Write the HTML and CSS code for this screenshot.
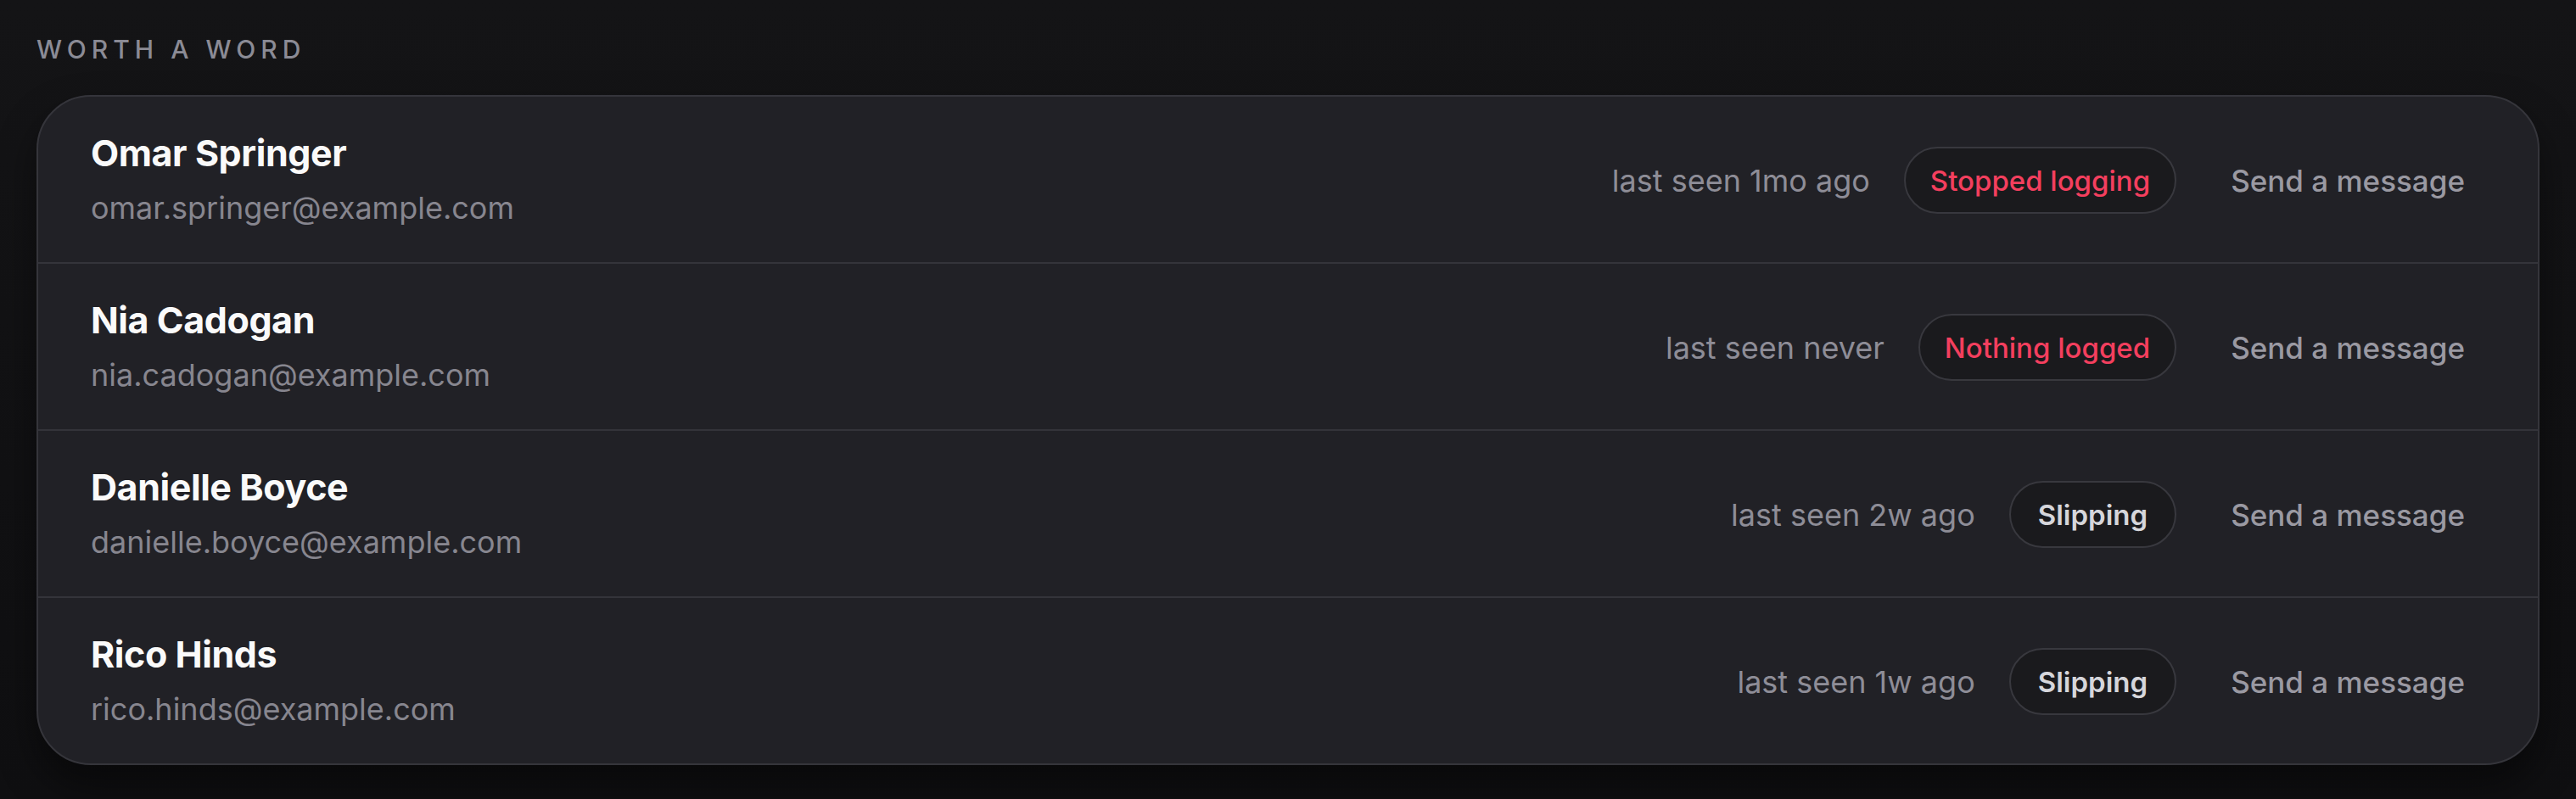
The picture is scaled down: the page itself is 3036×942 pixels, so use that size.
FILE: index.html
```html
<!DOCTYPE html>
<html lang="en">
<head>
<meta charset="utf-8">
<title>Worth a word</title>
<link rel="stylesheet" href="styles.css">
</head>
<body>
<section class="panel">
  <h2 class="panel-title">Worth a word</h2>
  <ul class="card">
    <li class="row">
      <div class="who">
        <div class="name">Omar Springer</div>
        <div class="email">omar.springer@example.com</div>
      </div>
      <div class="meta">
        <span class="seen">last seen 1mo ago</span>
        <span class="badge badge-alert">Stopped logging</span>
        <button class="msg" type="button">Send a message</button>
      </div>
    </li>
    <li class="row">
      <div class="who">
        <div class="name">Nia Cadogan</div>
        <div class="email">nia.cadogan@example.com</div>
      </div>
      <div class="meta">
        <span class="seen">last seen never</span>
        <span class="badge badge-alert">Nothing logged</span>
        <button class="msg" type="button">Send a message</button>
      </div>
    </li>
    <li class="row">
      <div class="who">
        <div class="name">Danielle Boyce</div>
        <div class="email">danielle.boyce@example.com</div>
      </div>
      <div class="meta">
        <span class="seen">last seen 2w ago</span>
        <span class="badge badge-muted">Slipping</span>
        <button class="msg" type="button">Send a message</button>
      </div>
    </li>
    <li class="row">
      <div class="who">
        <div class="name">Rico Hinds</div>
        <div class="email">rico.hinds@example.com</div>
      </div>
      <div class="meta">
        <span class="seen">last seen 1w ago</span>
        <span class="badge badge-muted">Slipping</span>
        <button class="msg" type="button">Send a message</button>
      </div>
    </li>
  </ul>
</section>
</body>
</html>
```

FILE: styles.css
```css
* {
  box-sizing: border-box;
}

html, body {
  margin: 0;
  height: 100%;
}

body {
  background: linear-gradient(180deg, #141416 0%, #0f0f11 100%);
  font-family: "Inter", "Noto Sans", sans-serif;
  color: #f5f5f7;
  padding: 40px 43px;
}

.panel-title {
  margin: 0 0 36px 0;
  font-size: 30px;
  line-height: 36px;
  font-weight: 500;
  letter-spacing: 0.2em;
  text-transform: uppercase;
  color: #8b8b95;
}

.card {
  list-style: none;
  margin: 0;
  padding: 0;
  background: #212126;
  border: 2px solid #35353b;
  border-radius: 64px;
  overflow: hidden;
  box-shadow: 0 24px 48px rgba(0, 0, 0, 0.45);
}

.row {
  display: flex;
  align-items: center;
  justify-content: space-between;
  padding: 42px 62px 40px 62px;
  border-top: 2px solid #34343a;
}

.row:first-child {
  border-top: 0;
}

.who {
  display: flex;
  flex-direction: column;
  gap: 18px;
}

.name {
  font-size: 43px;
  line-height: 48px;
  font-weight: 700;
  color: #fafafa;
  letter-spacing: -0.01em;
}

.email {
  font-size: 36px;
  line-height: 47px;
  font-weight: 400;
  color: #87868f;
}

.meta {
  display: flex;
  align-items: center;
  gap: 40px;
}

.seen {
  font-size: 36px;
  line-height: 42px;
  color: #8e8d97;
}

.badge {
  display: inline-flex;
  align-items: center;
  height: 79px;
  padding: 0 29px;
  border: 2px solid #38383e;
  border-radius: 999px;
  background: #1a1a1d;
  font-size: 33px;
  line-height: 38px;
}

.badge-alert {
  color: #f43f5e;
  font-weight: 500;
}

.badge-muted {
  color: #d6d6db;
  font-weight: 600;
  padding: 0 32px;
}

.msg {
  background: none;
  border: 0;
  padding: 0 24px;
  font-family: inherit;
  font-size: 35px;
  line-height: 42px;
  font-weight: 500;
  color: #9a99a2;
  cursor: pointer;
}
```
